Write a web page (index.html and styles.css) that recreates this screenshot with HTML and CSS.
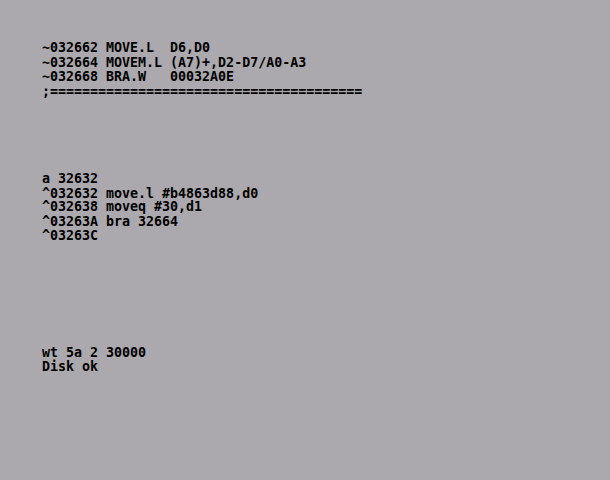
FILE: index.html
```html
<!DOCTYPE html>
<html>
<head>
<meta charset="utf-8">
<link rel="stylesheet" href="styles.css">
</head>
<body>
<main class="screen">
<pre class="console">~032662 MOVE.L  D6,D0
~032664 MOVEM.L (A7)+,D2-D7/A0-A3
~032668 BRA.W   00032A0E
;=======================================





a 32632
^032632 move.l #b4863d88,d0
^032638 moveq #30,d1
^03263A bra 32664
^03263C







wt 5a 2 30000
Disk ok</pre>
</main>
</body>
</html>
```
FILE: styles.css
```css
html, body {
  margin: 0;
  padding: 0;
  background: #aba9ad;
}
.screen {
  width: 610px;
  height: 480px;
  box-sizing: border-box;
  padding: 40.5px 0 0 42px;
  background: #aba9ad;
  overflow: hidden;
}
.console {
  margin: 0;
  font-family: "DejaVu Sans Mono", "Liberation Mono", monospace;
  font-weight: bold;
  font-size: 13.3px;
  line-height: 12.95px;
  color: #000;
  transform: scaleY(1.12);
  transform-origin: 0 0;
}
```
